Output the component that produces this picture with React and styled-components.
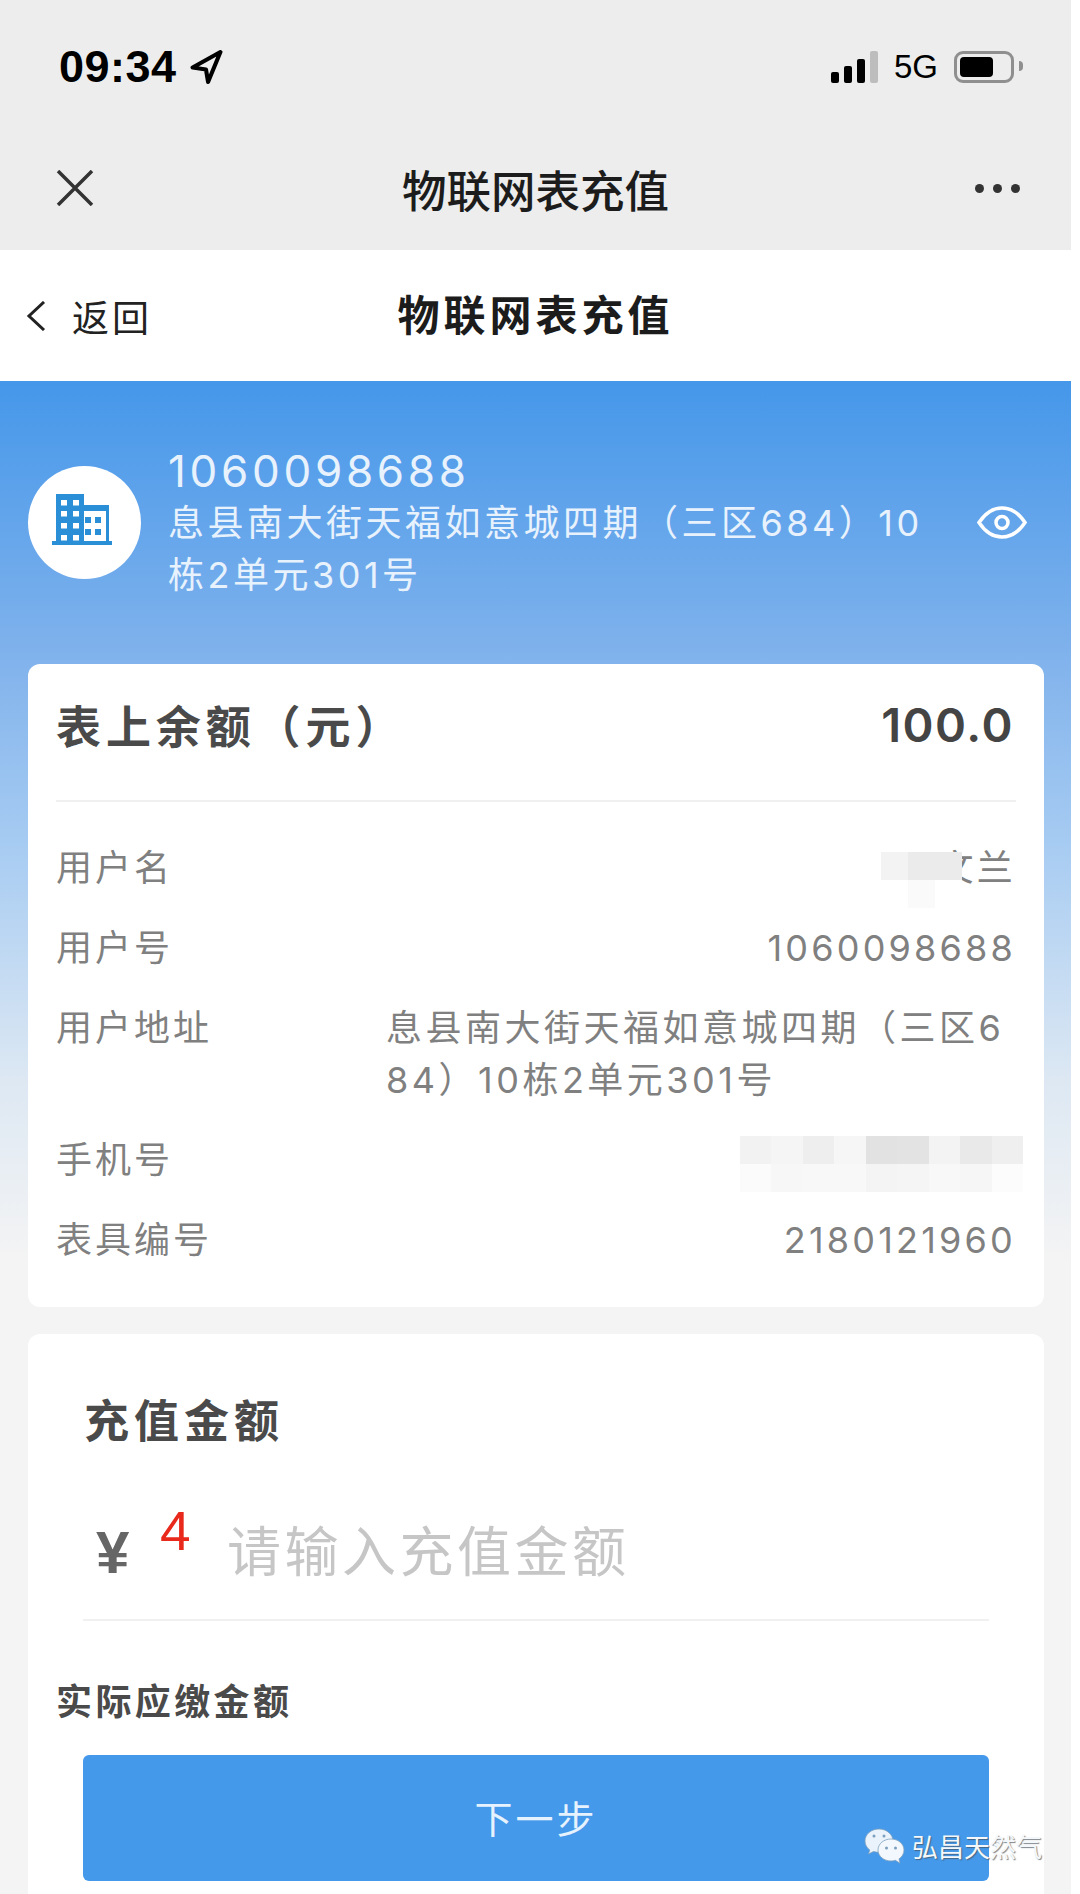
import styled, { createGlobalStyle } from "styled-components"

const GlobalStyle = createGlobalStyle`
  html, body {
    margin: 0;
    background: #fff;
  }
  * {
    box-sizing: border-box;
  }
`

const ROWS = [
  { label: "用户名", value: "文兰" },
  { label: "用户号", value: "1060098688" },
  { label: "用户地址", value: "息县南大街天福如意城四期（三区684）10栋2单元301号", multi: true },
  { label: "手机号", value: "" },
  { label: "表具编号", value: "2180121960" },
]

const SIGNAL = [11, 17, 24, 32]

const NAME_MOSAIC = ["#f3f3f3", "#ebebeb", "#ebebeb", "#fff", "#fafafa", "#fff"]
const PHONE_MOSAIC = [
  "#f2f2f2", "#f5f5f5", "#eeeeee", "#f6f6f6", "#e2e2e2", "#e3e3e3", "#f3f3f3", "#e9e9e9", "#efefef",
  "#fbfbfb", "#f7f7f7", "#f8f8f8", "#f8f8f8", "#f4f4f4", "#f5f5f5", "#f8f8f8", "#f6f6f6", "#fcfcfc",
]

function BuildingIcon() {
  return (
    <svg width="60" height="51" viewBox="0 0 60 51">
      <g fill="#2a8fd6">
        <path d="M4 0h28v47H4z" />
        <path d="M32 11h25v36h-3V17H32z" />
        <path d="M0 47h60v4H0z" />
      </g>
      <g fill="#fff">
        {[6, 17, 29, 41].map((y) => (
          <g key={y}>
            <rect x="9" y={y} width="6" height="5.5" />
            <rect x="21" y={y} width="6" height="5.5" />
          </g>
        ))}
      </g>
      <g fill="#2a8fd6">
        {[23, 35].map((y) => (
          <g key={y}>
            <rect x="33" y={y} width="6" height="6" />
            <rect x="43" y={y} width="6" height="6" />
          </g>
        ))}
      </g>
    </svg>
  )
}

function WechatIcon() {
  return (
    <svg width="42" height="36" viewBox="0 0 42 36">
      <path
        d="M15 1C7 1 1 6.500 1 13c0 3.600 1.800 6.800 4.800 9L4.500 26l5-2.500c1.600.5 3.500.8 5.500.8 8 0 14-5 14-11.300S23 1 15 1z"
        fill="#eaf3fb"
        stroke="#7d9fbd"
        strokeWidth="0.8"
      />
      <path
        d="M27 11c-7.200 0-13 4.900-13 11s5.800 11 13 11c1.600 0 3-.2 4.400-.7l4.600 3-1-4.400c3-2 5-5.200 5-8.900 0-6.100-5.800-11-13-11z"
        fill="#f2f8fd"
        stroke="#7d9fbd"
        strokeWidth="0.8"
      />
      <g fill="#7d9fbd">
        <circle cx="10" cy="8" r="1.500" />
        <circle cx="20" cy="8" r="1.500" />
        <circle cx="22.500" cy="20" r="1.500" />
        <circle cx="31.500" cy="20" r="1.500" />
      </g>
    </svg>
  )
}

export default function App() {
  return (
    <Page>
      <GlobalStyle />
      <TopBar>
        <StatusBar>
          <Clock>
            <span>09:34</span>
            <svg width="34" height="34" viewBox="0 0 32 33">
              <path d="M30 2 3 17l13 2 2 12z" fill="none" stroke="#000" strokeWidth="4" strokeLinejoin="round" />
            </svg>
          </Clock>
          <StatusIcons>
            <Signal>
              {SIGNAL.map((h, i) => (
                <SignalBar key={h} $height={h} $off={i === 3} />
              ))}
            </Signal>
            <Network>5G</Network>
            <Battery>
              <BatteryFill />
            </Battery>
          </StatusIcons>
        </StatusBar>
        <WechatNav>
          <CloseIcon width="38" height="36" viewBox="0 0 38 36">
            <path d="M2 1l34 34M36 1 2 35" stroke="#333" strokeWidth="3.500" fill="none" />
          </CloseIcon>
          <WechatTitle>物联网表充值</WechatTitle>
          <MoreDots>
            <Dot />
            <Dot />
            <Dot />
          </MoreDots>
        </WechatNav>
      </TopBar>

      <PageNav>
        <BackLink>
          <svg width="20" height="30" viewBox="0 0 20 30">
            <path d="M18 1 3 15l15 14" stroke="#222" strokeWidth="3" fill="none" />
          </svg>
          <span>返回</span>
        </BackLink>
        <PageTitle>物联网表充值</PageTitle>
        <span />
      </PageNav>

      <Main>
        <Hero>
          <Avatar>
            <BuildingIcon />
          </Avatar>
          <HeroText>
            <AccountNo>1060098688</AccountNo>
            <HeroAddress>息县南大街天福如意城四期（三区684）10栋2单元301号</HeroAddress>
          </HeroText>
          <svg width="50" height="33" viewBox="0 0 50 33">
            <path
              d="M2 16.500C9 6 17 2 25 2s16 4 23 14.500C41 27 33 31 25 31S9 27 2 16.500z"
              fill="none"
              stroke="#fff"
              strokeWidth="3.500"
            />
            <circle cx="25" cy="16.500" r="6" fill="none" stroke="#fff" strokeWidth="3.500" />
          </svg>
        </Hero>

        <Card>
          <BalanceRow>
            <BalanceLabel>表上余额（元）</BalanceLabel>
            <BalanceValue>100.0</BalanceValue>
          </BalanceRow>
          <InfoList>
            {ROWS.map((row) => (
              <InfoRow key={row.label}>
                <InfoLabel>{row.label}</InfoLabel>
                <InfoValue $multi={row.multi}>
                  {row.value}
                  {row.label === "用户名" && (
                    <Mosaic $columns={3} $width={81} $right={54} $top={10}>
                      {NAME_MOSAIC.map((c, i) => (
                        <MosaicCell key={i} style={{ background: c }} />
                      ))}
                    </Mosaic>
                  )}
                  {row.label === "手机号" && (
                    <Mosaic $columns={9} $width={283} $right={-7} $top={2}>
                      {PHONE_MOSAIC.map((c, i) => (
                        <MosaicCell key={i} style={{ background: c }} />
                      ))}
                    </Mosaic>
                  )}
                </InfoValue>
              </InfoRow>
            ))}
          </InfoList>
        </Card>

        <RechargeCard>
          <RechargeTitle>充值金额</RechargeTitle>
          <AmountRow>
            <Yen>¥</Yen>
            <Required>4</Required>
            <Placeholder>请输入充值金额</Placeholder>
          </AmountRow>
          <PayLabel>实际应缴金额</PayLabel>
          <NextButton>下一步</NextButton>
        </RechargeCard>
      </Main>

      <Watermark>
        <WechatIcon />
        <span>弘昌天然气</span>
      </Watermark>
    </Page>
  )
}

const Page = styled.div`
  position: relative;
  width: 1080px;
  height: 1894px;
  overflow: hidden;
  padding-right: 9px;
  background: #fff;
  font-family: "Inter", "Noto Sans CJK SC", sans-serif;
`

const TopBar = styled.header`
  height: 250px;
  background: #ededed;
`

const StatusBar = styled.div`
  height: 134px;
  padding: 0 57px 0 59px;
  display: flex;
  align-items: center;
  justify-content: space-between;
`

const Clock = styled.div`
  display: flex;
  align-items: center;
  gap: 12px;
  font-family: "Liberation Sans", sans-serif;
  font-size: 45px;
  font-weight: 700;
  letter-spacing: 0.500px;
  color: #000;
`

const StatusIcons = styled.div`
  display: flex;
  align-items: center;
`

const Signal = styled.div`
  display: flex;
  align-items: flex-end;
  gap: 5px;
  height: 32px;
`

const SignalBar = styled.i`
  display: block;
  width: 8px;
  height: ${(p) => p.$height}px;
  border-radius: 2px;
  background: ${(p) => (p.$off ? "#bdbdbd" : "#000")};
`

const Network = styled.span`
  margin: 0 16px;
  font-family: "Liberation Sans", sans-serif;
  font-size: 33px;
  color: #000;
`

const Battery = styled.div`
  position: relative;
  width: 60px;
  height: 32px;
  padding: 3px;
  border: 3px solid #8f8f8f;
  border-radius: 9px;

  &::after {
    content: "";
    position: absolute;
    right: -12px;
    top: 7px;
    width: 4px;
    height: 10px;
    border-radius: 0 4px 4px 0;
    background: #8f8f8f;
  }
`

const BatteryFill = styled.div`
  width: 33px;
  height: 100%;
  border-radius: 4px;
  background: #000;
`

const WechatNav = styled.nav`
  height: 112px;
  padding: 0 51px 4px;
  display: grid;
  grid-template-columns: 1fr auto 1fr;
  align-items: center;
`

const CloseIcon = styled.svg`
  margin-left: 5px;
`

const WechatTitle = styled.h1`
  margin: 0;
  font-size: 44.500px;
  font-weight: 500;
  color: #1c1c1c;
`

const MoreDots = styled.div`
  justify-self: end;
  display: flex;
  gap: 9px;
`

const Dot = styled.i`
  display: block;
  width: 9px;
  height: 9px;
  border-radius: 50%;
  background: #333;
`

const PageNav = styled.nav`
  height: 131px;
  padding: 0 26px;
  display: grid;
  grid-template-columns: 1fr auto 1fr;
  align-items: center;
  background: #fff;
`

const BackLink = styled.div`
  display: flex;
  align-items: center;
  gap: 26px;
  font-size: 37px;
  letter-spacing: 3px;
  color: #222;
`

const PageTitle = styled.h2`
  margin: 0 0 6px;
  font-size: 42px;
  font-weight: 700;
  letter-spacing: 4px;
  color: #1c1c1c;
`

const Main = styled.main`
  padding: 0 27px 0 28px;
  background: linear-gradient(
    180deg,
    #4597ea 0,
    #82b3ec 283px,
    #a6cbf2 460px,
    #dde8f3 700px,
    #f4f4f4 880px
  );
`

const Hero = styled.section`
  height: 283px;
  display: flex;
  align-items: center;
  color: #e8f2fd;
`

const Avatar = styled.div`
  flex: none;
  width: 113px;
  height: 113px;
  margin-right: 27px;
  padding: 0 5px 6px 0;
  border-radius: 50%;
  background: #fff;
  display: flex;
  align-items: center;
  justify-content: center;
`

const HeroText = styled.div`
  flex: none;
  width: 770px;
  margin-right: 39px;
`

const AccountNo = styled.div`
  font-size: 44px;
  line-height: 52px;
  letter-spacing: 3.700px;
`

const HeroAddress = styled.div`
  font-size: 36px;
  line-height: 52px;
  letter-spacing: 3.500px;
`

const Card = styled.section`
  background: #fff;
  border-radius: 12px;
  padding: 0 28px 41px;
`

const BalanceRow = styled.div`
  height: 138px;
  padding-bottom: 16px;
  display: flex;
  align-items: center;
  justify-content: space-between;
  border-bottom: 2px solid #f0f0f0;
`

const BalanceLabel = styled.div`
  font-size: 45px;
  font-weight: 700;
  letter-spacing: 4.900px;
  color: #4a4a4a;
`

const BalanceValue = styled.div`
  padding-right: 2px;
  font-size: 47px;
  font-weight: 600;
  letter-spacing: 1.500px;
  color: #444;
`

const InfoList = styled.div`
  padding-top: 40px;
  display: flex;
  flex-direction: column;
  gap: 28px;
`

const InfoRow = styled.div`
  display: grid;
  grid-template-columns: 330px 1fr;
  min-height: 52px;
  font-size: 36px;
  line-height: 52px;
  letter-spacing: 3px;
  color: #808080;
`

const InfoLabel = styled.div``

const InfoValue = styled.div`
  position: relative;
  text-align: ${(p) => (p.$multi ? "left" : "right")};
  letter-spacing: ${(p) => (p.$multi ? 3.5 : 3.2)}px;
  word-break: break-all;
`

const Mosaic = styled.div`
  position: absolute;
  right: ${(p) => p.$right}px;
  top: ${(p) => p.$top}px;
  width: ${(p) => p.$width}px;
  display: grid;
  grid-template-columns: repeat(${(p) => p.$columns}, 1fr);
  grid-auto-rows: 28px;
  filter: blur(0.500px);
`

const MosaicCell = styled.i`
  display: block;
`

const RechargeCard = styled.section`
  margin-top: 27px;
  padding: 58px 0 40px;
  background: #fff;
  border-radius: 12px;
`

const RechargeTitle = styled.h3`
  margin: 0;
  padding-left: 56px;
  font-size: 45px;
  line-height: 60px;
  font-weight: 700;
  letter-spacing: 5px;
  color: #4a4a4a;
`

const AmountRow = styled.div`
  height: 169px;
  margin: 0 55px;
  padding: 25px 0 0 13px;
  display: flex;
  align-items: center;
  border-bottom: 2px solid #f0f0f0;
`

const Yen = styled.span`
  width: 64px;
  margin-top: 8px;
  font-family: "Liberation Sans", sans-serif;
  font-size: 60px;
  font-weight: 700;
  color: #666;
`

const Required = styled.span`
  width: 67px;
  margin-bottom: 34px;
  font-family: "Liberation Sans", sans-serif;
  font-size: 55px;
  color: #e8291c;
`

const Placeholder = styled.span`
  font-size: 54px;
  letter-spacing: 3.500px;
  color: #c6c6c6;
`

const PayLabel = styled.div`
  margin-top: 55px;
  padding-left: 28px;
  font-size: 36px;
  line-height: 52px;
  font-weight: 700;
  letter-spacing: 3.400px;
  color: #4a4a4a;
`

const NextButton = styled.button`
  display: block;
  width: 906px;
  height: 126px;
  margin: 27px 0 0 55px;
  padding: 0 0 4px;
  border: 0;
  border-radius: 6px;
  background: #4499ea;
  font-family: inherit;
  font-size: 38px;
  letter-spacing: 3px;
  color: #e6f2fd;
`

const Watermark = styled.div`
  position: absolute;
  left: 864px;
  top: 1827px;
  display: flex;
  align-items: center;
  gap: 6px;
  font-size: 26px;
  color: #f4f8fb;
  text-shadow: 1px 1px 1px rgba(70, 80, 90, 0.7);
`
